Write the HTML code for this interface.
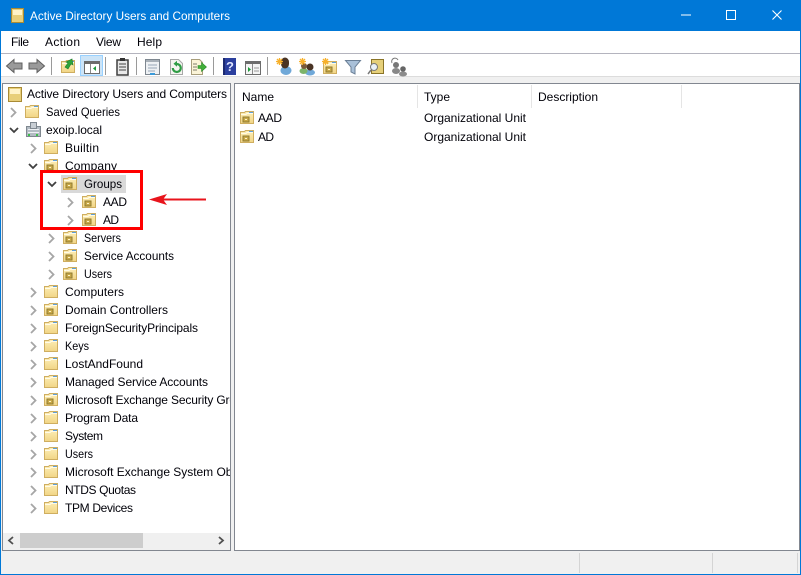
<!DOCTYPE html>
<html><head><meta charset="utf-8"><style>
html,body{margin:0;padding:0;background:#fff;overflow:hidden}
svg{display:block}
text{font-family:"Liberation Sans",sans-serif;font-size:12px;fill:#000008}
</style></head><body>
<svg xmlns="http://www.w3.org/2000/svg" width="801" height="575" viewBox="0 0 801 575">
<defs>
<linearGradient id="fg" x1="0" y1="0" x2="0" y2="1"><stop offset="0" stop-color="#fdeeb8"/><stop offset="1" stop-color="#f1d585"/></linearGradient>
<symbol id="f" width="15" height="14" viewBox="0 0 15 14" overflow="visible">
<path d="M.5 3.500V1.500h4l1-1h8v12h-13z" fill="url(#fg)" stroke="#cfae60"/>
<path d="M9 1h4v1.500H9z" fill="#5f9fd8"/>
<path d="M1 3.500h5l1-1h6" fill="none" stroke="#fffbe8"/>
</symbol>
<symbol id="ou" width="15" height="14" viewBox="0 0 15 14" overflow="visible">
<use href="#f"/>
<rect x="3" y="6" width="6" height="5" fill="#c8a848" stroke="#8f7a30" stroke-width="1"/>
<rect x="5" y="8" width="2" height="1" fill="#fff3c4"/>
</symbol>
<path id="cr" d="M0 0l4.500 4.500L0 9" fill="none" stroke="#a6a6a6" stroke-width="1.800"/>
<path id="cd" d="M0 0l4 4 4-4" fill="none" stroke="#404040" stroke-width="1.800"/>
<clipPath id="tc"><rect x="3" y="85" width="227" height="447"/></clipPath>
</defs>

<!-- window frame -->
<rect width="801" height="575" fill="#0078d7"/>
<rect x="1" y="31" width="799" height="543" fill="#fff"/>

<!-- title -->
<rect x="11.500" y="8.500" width="12" height="14" fill="#e8cf7a" stroke="#a98b35"/>
<rect x="13" y="10" width="9" height="5" fill="#fff3c8"/>
<text x="30" y="20" textLength="200" lengthAdjust="spacingAndGlyphs" style="fill:#fff">Active Directory Users and Computers</text>
<path d="M681 15h10" stroke="#fff"/>
<rect x="726.500" y="10.500" width="9" height="9" fill="none" stroke="#fff"/>
<path d="M772.500 10.500l9 9M781.500 10.500l-9 9" stroke="#fff" stroke-width="1.100"/>

<!-- menu -->
<text x="11" y="46" textLength="18">File</text>
<text x="45" y="46" textLength="35">Action</text>
<text x="96" y="46" textLength="25">View</text>
<text x="137" y="46" textLength="25">Help</text>
<rect x="1" y="53" width="799" height="1" fill="#b4b4be"/>

<!-- toolbar -->
<rect x="1" y="76" width="799" height="7" fill="#f0f0f0"/>
<rect x="1" y="76" width="799" height="1" fill="#dcdcdc"/>
<path d="M6.500 66l7.500-6.500v3.500h8v6h-8v3.500z" fill="#9a9a9a" stroke="#5f5f5f"/>
<path d="M44.500 66l-7.500-6.500v3.500h-8v6h8v3.500z" fill="#9a9a9a" stroke="#5f5f5f"/>
<rect x="51" y="57" width="1" height="18" fill="#9a9a9a"/>
<rect x="105" y="57" width="1" height="18" fill="#9a9a9a"/>
<rect x="136" y="57" width="1" height="18" fill="#9a9a9a"/>
<rect x="213" y="57" width="1" height="18" fill="#9a9a9a"/>
<rect x="267" y="57" width="1" height="18" fill="#9a9a9a"/>

<use href="#f" x="61" y="60"/>
<path d="M65 67l3-4-2-1 6-3 1 6-2-1-3 5z" fill="#2fa43a" stroke="#1f7c2a" stroke-width=".6"/>

<rect x="80.500" y="55.500" width="22" height="20" fill="#cce4f7" stroke="#99d1ff"/>
<rect x="84.500" y="61.500" width="15" height="12" fill="#fff" stroke="#6c6c6c"/>
<rect x="84" y="61" width="16" height="3" fill="#6c6c6c"/>
<path d="M90.500 64v9" stroke="#8a8a8a"/>
<path d="M96 66v5l-3-2.500z" fill="#1e9a3a"/>

<rect x="117" y="60" width="11" height="15" fill="#e8e8e8" stroke="#3f3f3f" stroke-width="1.500"/>
<rect x="120" y="58" width="5" height="3" fill="#333"/>
<path d="M119 64h7M119 67h7M119 70h7" stroke="#444"/>

<rect x="145.500" y="59.500" width="14" height="15" fill="#eef1f4" stroke="#7e8790"/>
<rect x="146" y="60" width="13" height="2" fill="#a8b0b8"/>
<path d="M148 65h9M148 68h9M148 71h7" stroke="#98a8b8"/>
<rect x="150" y="73" width="5" height="2" fill="#3a9ad9"/>

<path d="M170.500 59.500h8l4 4v11h-12z" fill="#f4f4f0" stroke="#a8a8a8"/>
<path d="M172.800 68a4 4 0 1 0 4-4" fill="none" stroke="#2f9c45" stroke-width="2.200"/>
<path d="M177 60.800v6l-3.500-3z" fill="#2f9c45"/>

<path d="M191.500 59.500h8l3 3v12h-11z" fill="#fbf4d8" stroke="#a89e7c"/>
<path d="M193 64h4M193 67h4M193 70h4" stroke="#7d7d6d"/>
<path d="M198 65.500h3.500V62.500l5 4.500-5 4.500V68.500H198z" fill="#42b03a" stroke="#2c8a2a" stroke-width=".6"/>

<rect x="223" y="58" width="13" height="17" fill="#2b3f9e"/>
<rect x="223" y="58" width="2" height="17" fill="#1c2a70"/>
<text x="226" y="71" style="font-size:13px;font-weight:bold;fill:#dfe6ff">?</text>

<rect x="245.500" y="61.500" width="15" height="13" fill="#f4f4f4" stroke="#6c6c6c"/>
<rect x="245" y="61" width="16" height="3" fill="#6c6c6c"/>
<path d="M252.500 64v10" stroke="#8a8a8a"/>
<path d="M248 67v5l3-2.500z" fill="#1e9a3a"/>
<path d="M254 68h5M254 71h5" stroke="#9a9a9a"/>

<!-- new user -->
<ellipse cx="286" cy="70.500" rx="5.500" ry="4.500" fill="#6fa8d8"/>
<path d="M281 62a4 4.500 0 0 1 8 0v2a4 4.500 0 0 1-8 0z" fill="#4a3424"/>
<path d="M276 61.500h7M279.500 58v7M277 59l5 5M282 59l-5 5" stroke="#f7b02a" stroke-width="1.300"/>
<!-- new group -->
<ellipse cx="310" cy="72.500" rx="5" ry="3" fill="#6fa8d8"/>
<circle cx="310" cy="67" r="3.500" fill="#4a3424"/>
<ellipse cx="303.500" cy="71" rx="4" ry="3" fill="#7cb46a"/>
<circle cx="304" cy="66" r="3" fill="#7a5a3a"/>
<path d="M299 61.500h7M302.500 58v7M300 59l5 5M305 59l-5 5" stroke="#f7b02a" stroke-width="1.300"/>
<!-- new OU -->
<use href="#ou" x="323" y="61"/>
<path d="M322 61.500h7M325.500 58v7M323 59l5 5M328 59l-5 5" stroke="#f7b02a" stroke-width="1.300"/>
<!-- filter -->
<path d="M345.500 60.500h15l-5.500 6.500v7l-4-2v-5z" fill="#a9c0d8" stroke="#6a7f96"/>
<!-- find -->
<rect x="371.500" y="59.500" width="12" height="14" fill="#e6d07a" stroke="#8a7428"/>
<circle cx="374" cy="67" r="3.500" fill="#eaf2f8" stroke="#7a7a7a"/>
<path d="M371 70l-3 4" stroke="#7a7a7a" stroke-width="1.500"/>
<!-- delegate -->
<path d="M392 63a3 3 0 0 1 6-3" fill="none" stroke="#777"/>
<circle cx="396" cy="65" r="3" fill="#777"/>
<ellipse cx="396" cy="71" rx="4" ry="3" fill="#888"/>
<circle cx="403" cy="69" r="2.800" fill="#666"/>
<ellipse cx="403" cy="74" rx="4" ry="2.500" fill="#8c8c8c"/>

<!-- status bar -->
<rect x="1" y="551" width="799" height="23" fill="#f0f0f0"/>
<rect x="579" y="553" width="1" height="20" fill="#d4d4d4"/>
<rect x="712" y="553" width="1" height="20" fill="#d4d4d4"/>
<rect x="797" y="553" width="1" height="20" fill="#d4d4d4"/>

<!-- gaps between panes -->
<rect x="1" y="83" width="799" height="469" fill="#f0f0f0"/>

<!-- left pane -->
<rect x="2.500" y="83.500" width="228" height="467" fill="#fff" stroke="#828790"/>
<!-- right pane -->
<rect x="234.500" y="83.500" width="565" height="467" fill="#fff" stroke="#828790"/>

<!-- list header -->
<text x="242" y="101" textLength="32">Name</text>
<text x="424" y="101" textLength="26">Type</text>
<text x="538" y="101" textLength="60">Description</text>
<rect x="417" y="85" width="1" height="23" fill="#e5e5e5"/>
<rect x="531" y="85" width="1" height="23" fill="#e5e5e5"/>
<rect x="681" y="85" width="1" height="23" fill="#e5e5e5"/>
<use href="#ou" x="240" y="111"/>
<text x="258" y="122" textLength="24">AAD</text>
<text x="424" y="122" textLength="102">Organizational Unit</text>
<use href="#ou" x="240" y="130"/>
<text x="258" y="141" textLength="16">AD</text>
<text x="424" y="141" textLength="102">Organizational Unit</text>

<!-- tree -->
<rect x="61" y="175" width="65" height="18" fill="#d9d9d9"/>
<g clip-path="url(#tc)">
<rect x="8.500" y="87.500" width="13" height="14" fill="#e8cf7a" stroke="#a98b35"/>
<rect x="10" y="89" width="10" height="5" fill="#fff3c8"/>
<text x="27" y="98" textLength="200">Active Directory Users and Computers</text>

<use href="#cr" x="11" y="108"/><use href="#f" x="25" y="105"/>
<text x="46" y="116" textLength="74" lengthAdjust="spacingAndGlyphs">Saved Queries</text>

<use href="#cd" x="10" y="128"/>
<g><rect x="26.500" y="126.500" width="14" height="10" fill="#b4bcc4" stroke="#7f8890"/><rect x="30.500" y="122.500" width="6" height="6" fill="#c8ced4" stroke="#7f8890"/><path d="M28 129.500h11M28 132.500h11" stroke="#eef1f4"/><rect x="28" y="134" width="2" height="2" fill="#3cc04a"/><rect x="36" y="134" width="2" height="2" fill="#3cc04a"/></g>
<text x="46" y="134" textLength="56">exoip.local</text>

<use href="#cr" x="31" y="144"/><use href="#f" x="44" y="141"/>
<text x="65" y="152" textLength="34">Builtin</text>

<use href="#cd" x="29" y="164"/><use href="#ou" x="44" y="159"/>
<text x="65" y="170" textLength="52">Company</text>

<use href="#cd" x="48" y="182"/><use href="#ou" x="63" y="177"/>
<text x="84" y="188" textLength="38" lengthAdjust="spacingAndGlyphs">Groups</text>

<use href="#cr" x="68" y="198"/><use href="#ou" x="82" y="195"/>
<text x="103" y="206" textLength="24">AAD</text>

<use href="#cr" x="68" y="216"/><use href="#ou" x="82" y="213"/>
<text x="103" y="224" textLength="16">AD</text>

<use href="#cr" x="49" y="234"/><use href="#ou" x="63" y="231"/>
<text x="84" y="242" textLength="37" lengthAdjust="spacingAndGlyphs">Servers</text>

<use href="#cr" x="49" y="252"/><use href="#ou" x="63" y="249"/>
<text x="84" y="260" textLength="90" lengthAdjust="spacingAndGlyphs">Service Accounts</text>

<use href="#cr" x="49" y="270"/><use href="#ou" x="63" y="267"/>
<text x="84" y="278" textLength="28" lengthAdjust="spacingAndGlyphs">Users</text>

<use href="#cr" x="31" y="288"/><use href="#f" x="44" y="285"/>
<text x="65" y="296" textLength="59">Computers</text>

<use href="#cr" x="31" y="306"/><use href="#ou" x="44" y="303"/>
<text x="65" y="314" textLength="103">Domain Controllers</text>

<use href="#cr" x="31" y="324"/><use href="#f" x="44" y="321"/>
<text x="65" y="332" textLength="133">ForeignSecurityPrincipals</text>

<use href="#cr" x="31" y="342"/><use href="#f" x="44" y="339"/>
<text x="65" y="350" textLength="24" lengthAdjust="spacingAndGlyphs">Keys</text>

<use href="#cr" x="31" y="360"/><use href="#f" x="44" y="357"/>
<text x="65" y="368" textLength="78">LostAndFound</text>

<use href="#cr" x="31" y="378"/><use href="#f" x="44" y="375"/>
<text x="65" y="386" textLength="143">Managed Service Accounts</text>

<use href="#cr" x="31" y="396"/><use href="#ou" x="44" y="393"/>
<text x="65" y="404" textLength="190">Microsoft Exchange Security Groups</text>

<use href="#cr" x="31" y="414"/><use href="#f" x="44" y="411"/>
<text x="65" y="422" textLength="73">Program Data</text>

<use href="#cr" x="31" y="432"/><use href="#f" x="44" y="429"/>
<text x="65" y="440" textLength="38">System</text>

<use href="#cr" x="31" y="450"/><use href="#f" x="44" y="447"/>
<text x="65" y="458" textLength="28" lengthAdjust="spacingAndGlyphs">Users</text>

<use href="#cr" x="31" y="468"/><use href="#f" x="44" y="465"/>
<text x="65" y="476" textLength="192">Microsoft Exchange System Objects</text>

<use href="#cr" x="31" y="486"/><use href="#f" x="44" y="483"/>
<text x="65" y="494" textLength="71">NTDS Quotas</text>

<use href="#cr" x="31" y="504"/><use href="#f" x="44" y="501"/>
<text x="65" y="512" textLength="68">TPM Devices</text>
</g>

<!-- scrollbar -->
<rect x="3" y="533" width="227" height="17" fill="#f0f0f0"/>
<rect x="20" y="533" width="123" height="15" fill="#cdcdcd"/>
<path d="M13 537l-4 3.500 4 3.500" fill="none" stroke="#505050" stroke-width="1.800"/>
<path d="M219 537l4 3.500-4 3.500" fill="none" stroke="#505050" stroke-width="1.800"/>

<!-- annotation -->
<rect x="41.500" y="171.500" width="100" height="57" fill="none" stroke="#ff0000" stroke-width="3"/>
<path d="M206 199.500h-50" stroke="#e8141c" stroke-width="2"/>
<path d="M149 199.500l18-5.500-4 5.500 4 5.500z" fill="#e8141c"/>
</svg>
</body></html>
